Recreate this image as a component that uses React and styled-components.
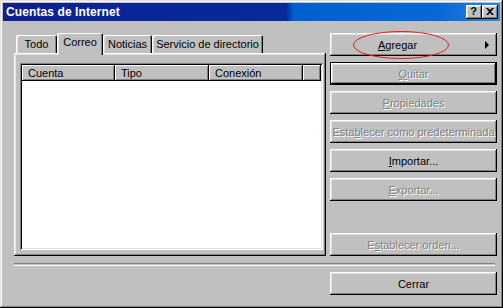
import React from 'react'
import styled, { createGlobalStyle } from 'styled-components'

const GlobalStyle = createGlobalStyle`
  html, body {
    margin: 0;
    padding: 0;
    background: #c0c0c0;
  }
  body {
    font-family: "Liberation Sans", Arial, sans-serif;
    font-size: 11px;
    color: #000;
  }
`;

const raised = `
  box-shadow: inset -1px -1px #000, inset 1px 1px #fff, inset -2px -2px #808080, inset 2px 2px #dfdfdf;
`;

const Window = styled.div`
  box-sizing: border-box;
  width: 503px;
  height: 308px;
  padding: 3px;
  background: #c0c0c0;
  box-shadow: inset -1px -1px #000, inset 1px 1px #dfdfdf, inset -2px -2px #808080, inset 2px 2px #fff;
  display: flex;
  flex-direction: column;
`;

const TitleBar = styled.div`
  height: 18px;
  display: flex;
  align-items: center;
  padding: 0 2px 0 3px;
  background: linear-gradient(90deg, #141e8c 0%, #0a2496 17%, #062a9c 57%, #0060cf 58.5%, #0868d6 88%, #2c88e0 100%);
`;

const Title = styled.span`
  flex: 1;
  color: #fff;
  font-weight: bold;
  font-size: 12px;
  letter-spacing: 0.1px;
`;

const Controls = styled.div`
  display: flex;
`;

const CtlButton = styled.div`
  box-sizing: border-box;
  width: 16px;
  height: 14px;
  background: #c0c0c0;
  ${raised}
  display: flex;
  align-items: center;
  justify-content: center;
  font-weight: bold;
  font-size: 11px;
  line-height: 1;
  padding: 0 1px 1px 0;
`;

const Body = styled.div`
  flex: 1;
  display: flex;
  flex-direction: column;
  padding: 12px 3px 0 11px;
`;

const Main = styled.div`
  display: flex;
  gap: 4px;
  height: 223px;
`;

const TabArea = styled.div`
  width: 312px;
  display: flex;
  flex-direction: column;
`;

const TabStrip = styled.div`
  height: 20px;
  display: flex;
  align-items: flex-end;
  padding-left: 2px;
`;

const Tab = styled.div`
  box-sizing: border-box;
  position: relative;
  z-index: ${p => (p.$active ? 1 : 0)};
  width: ${p => p.$w}px;
  height: ${p => (p.$active ? 22 : 18)}px;
  margin-bottom: ${p => (p.$active ? -2 : 0)}px;
  padding-bottom: ${p => (p.$active ? 4 : 1)}px;
  background: #c0c0c0;
  border-radius: 2px 2px 0 0;
  box-shadow: inset 1px 1px #fff, inset 2px 0 #dfdfdf, inset -1px 0 #000, inset -2px 0 #808080;
  display: flex;
  align-items: center;
  justify-content: center;
  white-space: nowrap;
`;

const Panel = styled.div`
  box-sizing: border-box;
  flex: 1;
  display: flex;
  padding: 10px 3px 6px 6px;
  background: #c0c0c0;
  box-shadow: inset -1px -1px #000, inset 1px 1px #fff, inset -2px -2px #808080, inset 2px 2px #dfdfdf;
`;

const ListView = styled.div`
  box-sizing: border-box;
  flex: 1;
  padding: 2px;
  background: #fff;
  box-shadow: inset 1px 1px #808080, inset -1px -1px #fff, inset 2px 2px #000, inset -2px -2px #dfdfdf;
  display: flex;
  flex-direction: column;
`;

const HeaderRow = styled.div`
  display: flex;
  height: 16px;
`;

const HeaderCell = styled.div`
  box-sizing: border-box;
  width: ${p => (p.$w ? `${p.$w}px` : 'auto')};
  flex: ${p => (p.$w ? 'none' : 1)};
  background: #c0c0c0;
  box-shadow: inset -1px -1px #000, inset 1px 1px #fff, inset -2px -2px #808080;
  padding: 0 0 1px 6px;
  display: flex;
  align-items: center;
`;

const ButtonColumn = styled.div`
  width: 167px;
  display: flex;
  flex-direction: column;
  gap: 6px;
`;

const Button = styled.div`
  box-sizing: border-box;
  position: relative;
  width: 167px;
  height: 23px;
  margin-top: ${p => (p.$push ? 'auto' : '0')};
  padding-right: ${p => (p.$menu ? 32 : 0)}px;
  background: #c0c0c0;
  box-shadow: ${p =>
    p.$default
      ? 'inset 0 0 0 1px #000, inset -2px -2px #000, inset 2px 2px #fff, inset -3px -3px #808080, inset 3px 3px #dfdfdf'
      : 'inset -1px -1px #000, inset 1px 1px #fff, inset -2px -2px #808080, inset 2px 2px #dfdfdf'};
  display: flex;
  align-items: center;
  justify-content: center;
  white-space: nowrap;
  color: ${p => (p.$disabled ? '#808080' : '#000')};
  text-shadow: ${p => (p.$disabled ? '1px 1px 0 #fff' : 'none')};

  u {
    text-decoration: underline;
    text-underline-offset: 1px;
  }
`;

const Arrow = styled.span`
  position: absolute;
  right: 8px;
  top: 8px;
  width: 0;
  height: 0;
  border-top: 4px solid transparent;
  border-bottom: 4px solid transparent;
  border-left: 4px solid #000;
`;

const Circle = styled.svg`
  position: absolute;
  left: 22px;
  top: -3px;
  pointer-events: none;
`;

const Separator = styled.div`
  margin: 7px 2px 0 0;
  height: 1px;
  border-top: 1px solid #808080;
  border-bottom: 1px solid #fff;
`;

const Footer = styled.div`
  display: flex;
  justify-content: flex-end;
  margin-top: 6px;
`;

const tabs = [
  { label: 'Todo', w: 41 },
  { label: 'Correo', w: 46, active: true },
  { label: 'Noticias', w: 49 },
  { label: 'Servicio de directorio', w: 111 },
];

const columns = [
  { label: 'Cuenta', w: 93 },
  { label: 'Tipo', w: 94 },
  { label: 'Conexión', w: 94 },
  { label: '' },
];

export default function App() {
  return (
    <>
      <GlobalStyle />
      <Window>
        <TitleBar>
          <Title>Cuentas de Internet</Title>
          <Controls>
            <CtlButton>?</CtlButton>
            <CtlButton>
              <svg width="8" height="7" viewBox="0 0 8 7">
                <path d="M0 0h2l2 2 2-2h2L5 3.5 8 7H6L4 5 2 7H0l3-3.5z" fill="#000" />
              </svg>
            </CtlButton>
          </Controls>
        </TitleBar>

        <Body>
          <Main>
            <TabArea>
              <TabStrip>
                {tabs.map(t => (
                  <Tab key={t.label} $w={t.w} $active={t.active}>{t.label}</Tab>
                ))}
              </TabStrip>
              <Panel>
                <ListView>
                  <HeaderRow>
                    {columns.map((c, i) => (
                      <HeaderCell key={i} $w={c.w}>{c.label}</HeaderCell>
                    ))}
                  </HeaderRow>
                </ListView>
              </Panel>
            </TabArea>

            <ButtonColumn>
              <Button $menu>
                <span><u>A</u>gregar</span>
                <Arrow />
                <Circle width="98" height="30" viewBox="0 0 98 30">
                  <ellipse cx="49" cy="15" rx="47.5" ry="13.5" fill="none" stroke="#e81c1c" strokeWidth="1" />
                </Circle>
              </Button>
              <Button $disabled $default><span><u>Q</u>uitar</span></Button>
              <Button $disabled><span><u>P</u>ropiedades</span></Button>
              <Button $disabled><span>Esta<u>b</u>lecer como predeterminada</span></Button>
              <Button><span><u>I</u>mportar...</span></Button>
              <Button $disabled><span><u>E</u>xportar...</span></Button>
              <Button $disabled $push><span>E<u>s</u>tablecer orden...</span></Button>
            </ButtonColumn>
          </Main>

          <Separator />

          <Footer>
            <Button>Cerrar</Button>
          </Footer>
        </Body>
      </Window>
    </>
  )
}
